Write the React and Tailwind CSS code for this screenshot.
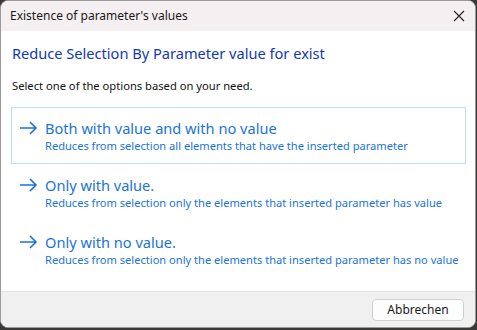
import React from "react";

function Arrow() {
  return (
    <svg width="19" height="14" viewBox="0 0 19 14" className="shrink-0">
      <path d="M1 7 H17 M11 1 L17 7 L11 13" fill="none" stroke="#1a74d8" strokeWidth="1.6" />
    </svg>
  );
}

function Option({ title, desc, boxed }) {
  return (
    <div
      className={
        "flex flex-col h-[57px] pl-[7px] pt-[10px] " +
        (boxed ? "border border-[#c0dcf3]" : "border border-transparent")
      }
    >
      <div className="flex items-center gap-[7px] h-[20px]">
        <Arrow />
        <span className="text-[14.6px] leading-[20px] text-[#1a74d8]">{title}</span>
      </div>
      <div className="pl-[26px] text-[11.1px] leading-[15px] text-[#1a74d8]">{desc}</div>
    </div>
  );
}

export default function App() {
  return (
    <div
      className="w-[477px] h-[330px] bg-[#3b3838]"
      style={{ fontFamily: '"Noto Sans", "Segoe UI", sans-serif' }}
    >
      <div className="w-[476px] h-[328px] bg-white rounded-[8px] border border-[#9a9a9a] overflow-hidden flex flex-col">
        <div className="h-[30px] bg-[#f4eff0] flex items-center justify-between pl-[9px] pr-[10px] shrink-0">
          <span className="text-[12px] text-[#1a1a1a]">Existence of parameter's values</span>
          <svg width="12" height="12" viewBox="0 0 12 12">
            <path d="M1 1 L11 11 M11 1 L1 11" stroke="#222" strokeWidth="1.1" />
          </svg>
        </div>
        <div className="flex-1 flex flex-col px-[10px]">
          <div className="pt-[11px] pl-[1px] text-[14.6px] leading-[22px] text-[#1238b8]">
            Reduce Selection By Parameter value for exist
          </div>
          <div className="pt-[14px] pl-[1px] text-[11.2px] leading-[16px] text-[#111]">
            Select one of the options based on your need.
          </div>
          <div className="mt-[13px] flex flex-col w-[455px]">
            <Option
              boxed
              title="Both with value and with no value"
              desc="Reduces from selection all elements that have the inserted parameter"
            />
            <Option
              title="Only with value."
              desc="Reduces from selection only the elements that inserted parameter has value"
            />
            <Option
              title="Only with no value."
              desc="Reduces from selection only the elements that inserted parameter has no value"
            />
          </div>
        </div>
        <div className="h-[36px] bg-[#f0f0f0] border-t border-[#e2e2e2] flex items-center justify-end pr-[11px] shrink-0">
          <button className="w-[92px] h-[22px] bg-[#fdfdfd] border border-[#d0d0d0] rounded-[4px] text-[12px] text-[#1a1a1a]">
            Abbrechen
          </button>
        </div>
      </div>
    </div>
  );
}
